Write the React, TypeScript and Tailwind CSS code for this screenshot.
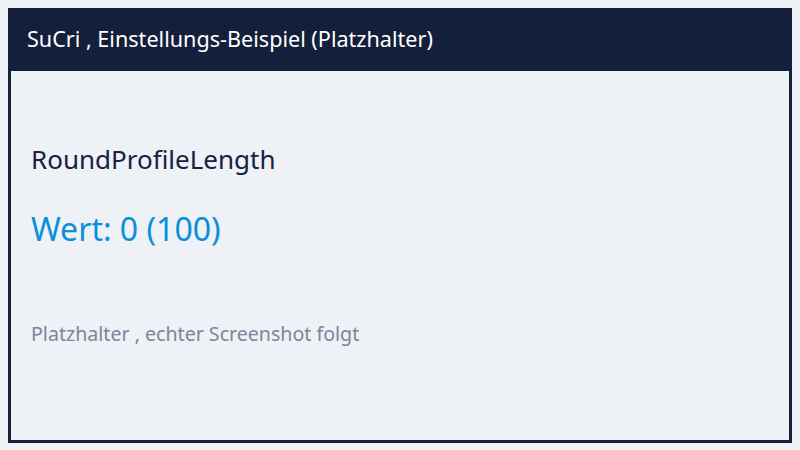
import React from 'react';

const SettingCard: React.FC<{ name: string; value: number; max: number }> = ({ name, value, max }) => {
    return (
        <div className="m-2 h-[435px] border-[3px] border-[#141f3b] bg-[#eef1f6] flex flex-col">
            <div className="h-[60px] bg-[#141f3b] px-4 pt-[13px]">
                <h1 className="text-[21.6px] leading-[29px] text-white">SuCri , Einstellungs-Beispiel (Platzhalter)</h1>
            </div>
            <div className="px-5 pt-[70px]">
                <p className="text-[26px] leading-[36px] text-[#172240]">{name}</p>
                <p className="mt-[30px] text-[32px] leading-[44px] text-[#0a90da]">
                    Wert: {value} ({max})
                </p>
                <p className="mt-[69px] text-[19.6px] leading-[27px] text-[#7b8698]">Platzhalter , echter Screenshot folgt</p>
            </div>
        </div>
    );
};

export default function App() {
    return (
        <div className="min-h-[450px] bg-[#eef1f6] overflow-hidden" style={{ fontFamily: '"Noto Sans", "Open Sans", sans-serif' }}>
            <SettingCard name="RoundProfileLength" value={0} max={100} />
        </div>
    );
}
